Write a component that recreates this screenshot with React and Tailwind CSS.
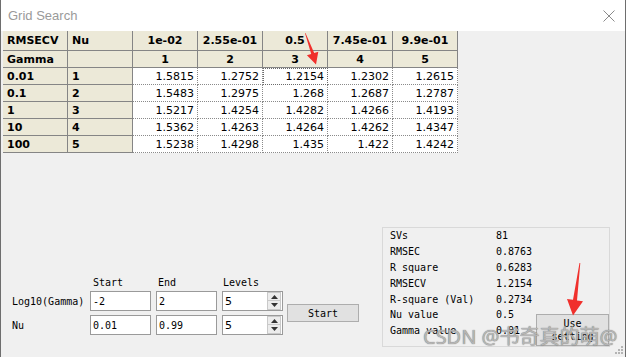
import React from "react";

const header1 = ["RMSECV", "Nu", "1e-02", "2.55e-01", "0.5", "7.45e-01", "9.9e-01"];
const header2 = ["Gamma", "", "1", "2", "3", "4", "5"];
const rows = [
  ["0.01", "1", ["1.5815", "1.2752", "1.2154", "1.2302", "1.2615"]],
  ["0.1", "2", ["1.5483", "1.2975", "1.268", "1.2687", "1.2787"]],
  ["1", "3", ["1.5217", "1.4254", "1.4282", "1.4266", "1.4193"]],
  ["10", "4", ["1.5362", "1.4263", "1.4264", "1.4262", "1.4347"]],
  ["100", "5", ["1.5238", "1.4298", "1.435", "1.422", "1.4242"]],
];
const stats = [
  ["SVs", "81"],
  ["RMSEC", "0.8763"],
  ["R square", "0.6283"],
  ["RMSECV", "1.2154"],
  ["R-square (Val)", "0.2734"],
  ["Nu value", "0.5"],
  ["Gamma value", "0.01"],
];

function Spin({ value }) {
  return (
    <div className="w-[61px] h-[20px] bg-white border border-[#9a9a9a] flex items-center relative">
      <span className="pl-[2px] flex-1 text-[11px] font-['DejaVu_Sans',sans-serif] leading-none">{value}</span>
      <div className="w-[14px] h-[18px] mr-[1px] flex flex-col">
        <div className="h-[9px] bg-[#ececec] border border-[#c9c9c9] flex items-center justify-center">
          <svg width="7" height="4" viewBox="0 0 7 4"><polygon points="0,4 7,4 3.5,0" fill="#333" /></svg>
        </div>
        <div className="h-[9px] bg-[#ececec] border border-t-0 border-[#c9c9c9] flex items-center justify-center">
          <svg width="7" height="4" viewBox="0 0 7 4"><polygon points="0,0 7,0 3.5,4" fill="#333" /></svg>
        </div>
      </div>
    </div>
  );
}

function Field({ value }) {
  return (
    <div className="w-[61px] h-[20px] bg-white border border-[#9a9a9a] flex items-center pl-[2px] text-[10px] font-['DejaVu_Sans_Mono',monospace]">
      {value}
    </div>
  );
}

export default function App() {
  const hdr = "bg-[#ece9d8] border-r border-b border-[#858585] font-bold flex items-center";
  return (
    <div className="w-[626px] h-[357px] relative overflow-hidden bg-[#f0f0f0] border-l border-r border-[#6e6e6e] flex flex-col font-['DejaVu_Sans',sans-serif] text-black">
      {/* Title bar */}
      <div className="h-[31px] bg-white flex items-center justify-between pl-[7px] pr-[10px] shrink-0">
        <span className="text-[13px] text-[#9a9a9a] font-['Liberation_Sans',Arial,sans-serif]">Grid Search</span>
        <svg width="12" height="12" viewBox="0 0 12 12">
          <path d="M0.5 0.5 L11.5 11.5 M11.5 0.5 L0.5 11.5" stroke="#8a8a8a" strokeWidth="1" />
        </svg>
      </div>

      {/* Table */}
      <div className="ml-[2px] grid grid-cols-[repeat(7,65px)] grid-rows-[20px_repeat(6,17px)] text-[11px] leading-none w-max">
        {header1.map((h, i) => (
          <div key={"a" + i} className={hdr + (i < 2 ? " justify-start pl-[4px]" : " justify-center")}>{h}</div>
        ))}
        {header2.map((h, i) => (
          <div key={"b" + i} className={hdr + (i < 2 ? " justify-start pl-[4px]" : " justify-center")}>{h}</div>
        ))}
        {rows.map((r, ri) => (
          <React.Fragment key={ri}>
            <div className={hdr + " justify-start pl-[4px]"}>{r[0]}</div>
            <div className={hdr + " justify-start pl-[4px]"}>{r[1]}</div>
            {r[2].map((v, ci) => (
              <div
                key={ci}
                className={
                  "bg-white border-r border-b border-dotted border-[#8a8a8a] flex items-center justify-end pr-[3px]" +
                  (ri === 0 && ci === 2 ? " outline-1 outline-dotted outline-[#6a6a6a] -outline-offset-1" : "")
                }
              >
                {v}
              </div>
            ))}
          </React.Fragment>
        ))}
      </div>

      {/* Bottom area */}
      <div className="flex-1 flex items-end justify-between">
        {/* Form */}
        <div className="ml-[11px] mb-[22px] flex items-end font-['DejaVu_Sans_Mono',monospace] text-[10px]">
          <div className="flex flex-col">
            <div className="flex h-[12px] items-center">
              <div className="w-[78px]" />
              <div className="w-[66px] pl-[3px]">Start</div>
              <div className="w-[66px] pl-[2px]">End</div>
              <div className="pl-[1px]">Levels</div>
            </div>
            <div className="flex items-center mt-[3px]">
              <div className="w-[78px]">Log10(Gamma)</div>
              <Field value="-2" />
              <div className="ml-[5px]"><Field value="2" /></div>
              <div className="ml-[5px]"><Spin value="5" /></div>
            </div>
            <div className="flex items-center mt-[4px]">
              <div className="w-[78px]">Nu</div>
              <Field value="0.01" />
              <div className="ml-[5px]"><Field value="0.99" /></div>
              <div className="ml-[5px]"><Spin value="5" /></div>
            </div>
          </div>
          <button className="ml-[4px] mb-[13px] w-[72px] h-[18px] bg-[#e1e1e1] border border-[#adadad] flex items-center justify-center">
            Start
          </button>
        </div>

        {/* Stats box */}
        <div className="mr-[15px] mb-[10px] w-[228px] h-[120px] border border-[#d9d9d9] flex font-['DejaVu_Sans_Mono',monospace] text-[10px]">
          <div className="flex-1 pl-[7px]">
            {stats.map(([k, v]) => (
              <div key={k} className="flex h-[15.8px] items-center">
                <div className="w-[106px]">{k}</div>
                <div>{v}</div>
              </div>
            ))}
          </div>
          <div className="self-end w-[73px] h-[32px] bg-[#e1e1e1] border border-[#adadad] flex flex-col items-center justify-center leading-[13px]">
            <span>Use</span>
            <span>setting</span>
          </div>
        </div>
      </div>

      {/* Watermark */}
      <div className="absolute left-[422px] top-[327px] text-[20px] leading-none font-['Noto_Sans','Noto_Sans_CJK_SC',sans-serif] text-[#c4c4c4]/85 [text-shadow:0_0_1px_#555] pointer-events-none whitespace-nowrap">
        CSDN @书奇真的萌@
      </div>

      {/* Resize grip */}
      <svg className="absolute left-[613px] top-[345px] pointer-events-none" width="10" height="10" viewBox="0 0 10 10">
        <rect x="7" y="1" width="2" height="2" fill="#b4b4b4" />
        <rect x="7" y="4" width="2" height="2" fill="#b4b4b4" />
        <rect x="4" y="4" width="2" height="2" fill="#b4b4b4" />
        <rect x="7" y="7" width="2" height="2" fill="#b4b4b4" />
        <rect x="4" y="7" width="2" height="2" fill="#b4b4b4" />
        <rect x="1" y="7" width="2" height="2" fill="#b4b4b4" />
      </svg>

      {/* Red arrows */}
      <svg className="absolute left-0 top-0 pointer-events-none" width="626" height="357" viewBox="0 0 626 357">
        <polygon points="304.5,33 313.2,53 317.3,51.7 315,64.5 305.9,55.3 310.2,54 304,33.3" fill="#f0302c" />
        <polygon points="579.3,263 576,300.4 582,301.2 572,315.5 566,299 572,299.8 578.5,263" fill="#f0302c" />
      </svg>
    </div>
  );
}
